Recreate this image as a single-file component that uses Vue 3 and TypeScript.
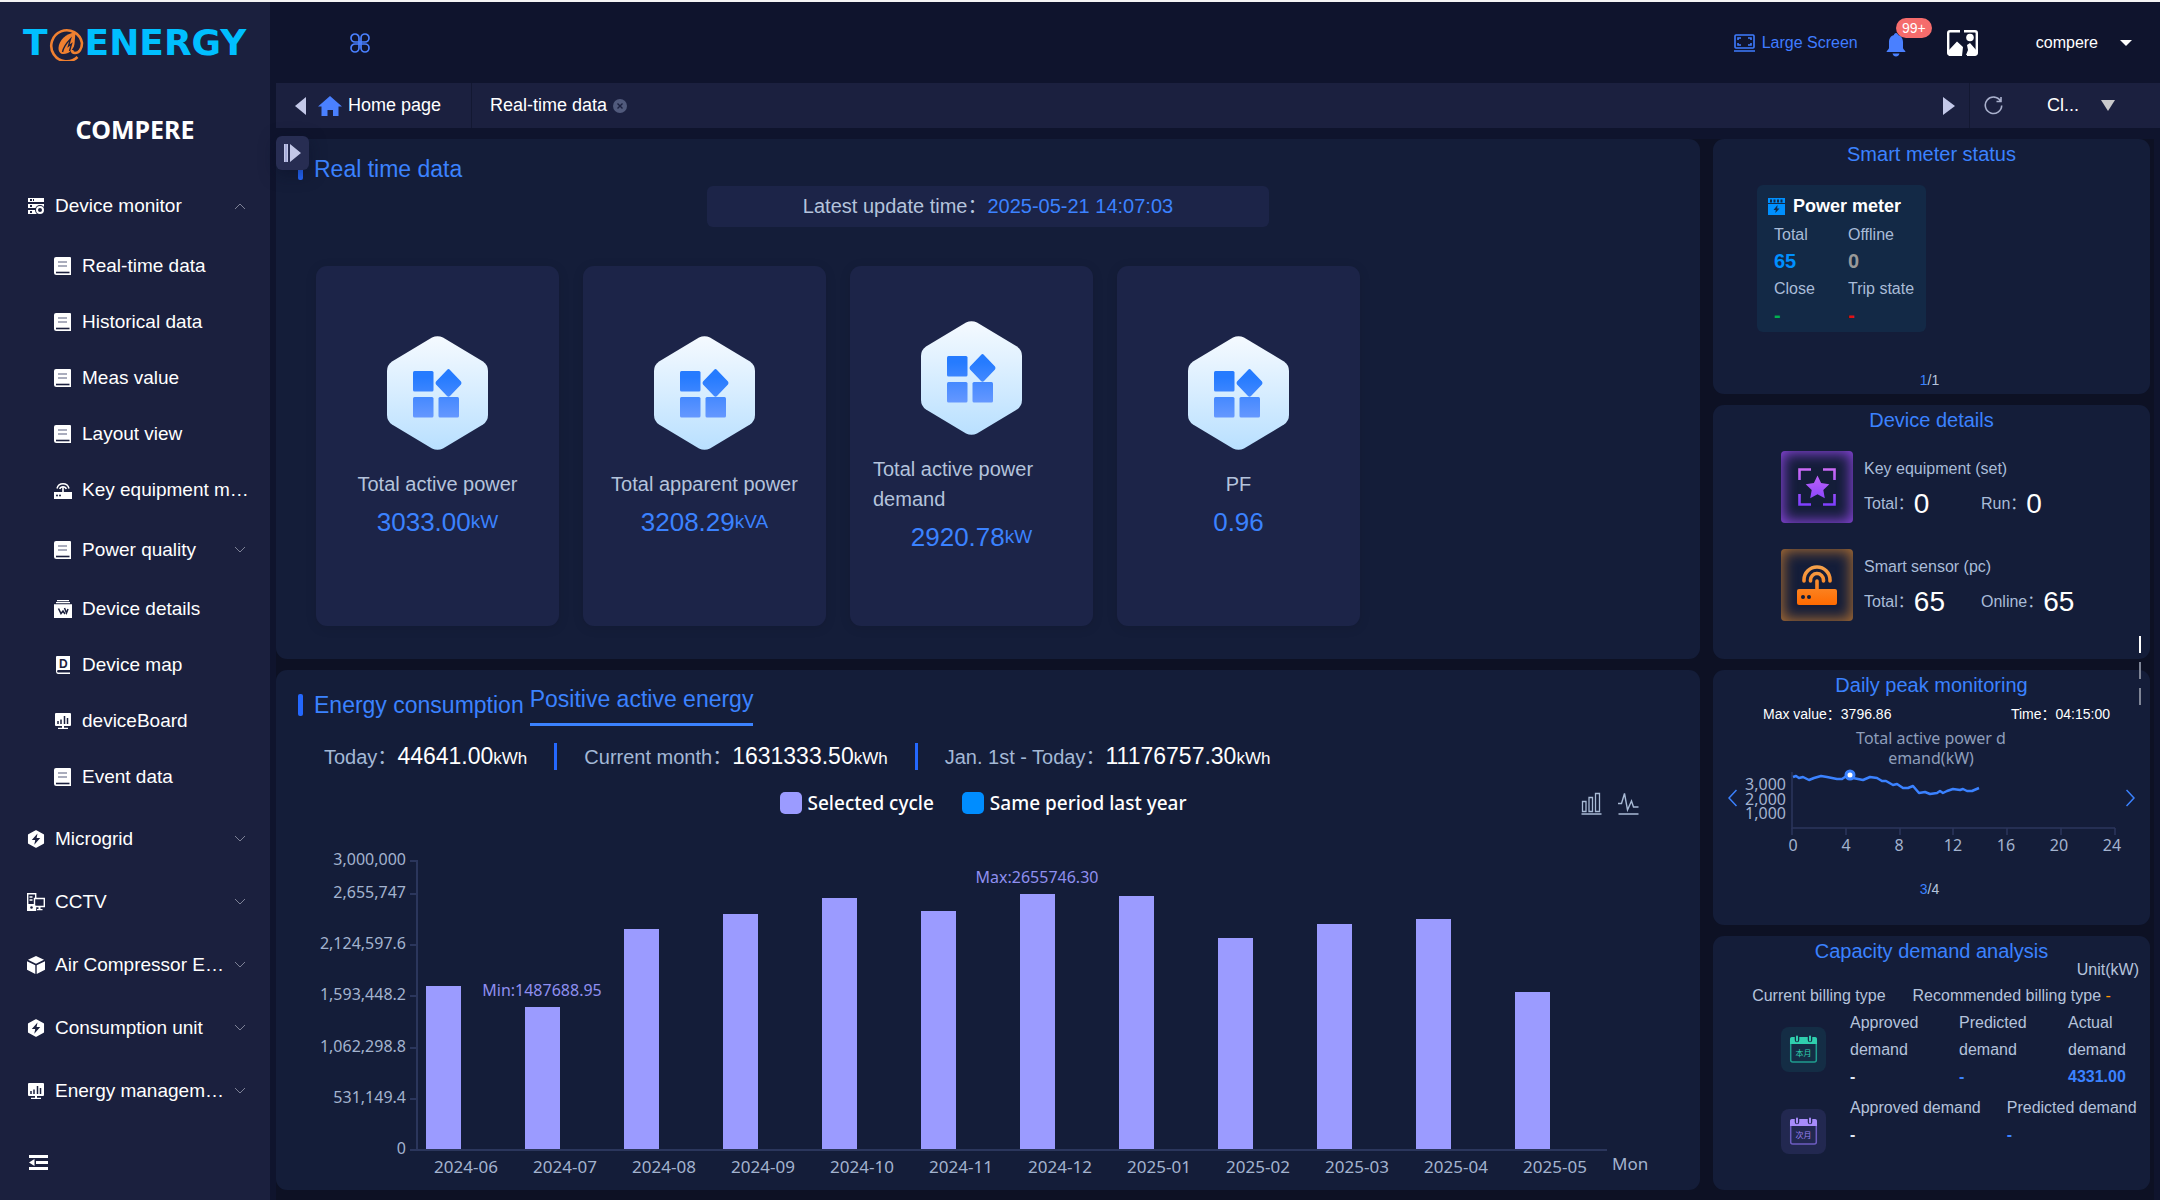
<script setup lang="ts">
import { ref } from 'vue'

interface MenuItem {
  label: string
  icon: string
  open?: boolean
  expandable?: boolean
  children?: MenuItem[]
}

const icons: Record<string, string> = {
  server:
    '<path fill="#fff" d="M1 1h16v4H1zM1 7h16v4H1zM1 13h9v4H1z"/><g fill="#1b203e"><rect x="3" y="2" width="2" height="2"/><rect x="3" y="8" width="2" height="2"/><rect x="3" y="14" width="2" height="2"/><rect x="6" y="2" width="1" height="2"/></g><circle cx="13" cy="13" r="5" fill="#1b203e"/><circle cx="13" cy="13" r="3" fill="none" stroke="#fff" stroke-width="2"/>',
  book:
    '<path fill="#fff" d="M2 0h14a1 1 0 0 1 1 1v17H2.500a2.500 2.500 0 0 1-2.500-2.500V2a2 2 0 0 1 2-2z"/><path stroke="#8f93a8" stroke-width="1.300" d="M4 5h9M4 9h9"/><path stroke="#1b203e" stroke-width="1.600" d="M2 15.500h13.500"/>',
  router:
    '<path fill="#fff" d="M0 11h18v7H0zM8.200 6h1.600v5H8.200z"/><g fill="none" stroke="#fff" stroke-width="1.500"><path d="M3 7.500a6.200 6.200 0 0 1 12 0M5.700 8a3.500 3.500 0 0 1 6.600 0"/></g><circle cx="3" cy="14.500" r="1" fill="#1b203e"/><circle cx="6" cy="14.500" r="1" fill="#1b203e"/>',
  archive:
    '<path fill="#fff" d="M3 0h12v1.300H3zM2 2h14v1.300H2zM0 4.200h18V18H0z"/><path fill="none" stroke="#1b203e" stroke-width="1.500" d="M4.500 8.500l2.500 5 2-2.500 2 3M10.500 8l2 5 1.500-4"/>',
  dmap:
    '<path fill="#fff" d="M3 0h13v14H4a1.300 1.300 0 0 0 0 2.500h12V18H4a2.600 2.600 0 0 1-2-2.500V1a1 1 0 0 1 1-1z"/><text x="9.300" y="11.500" text-anchor="middle" font-family="Liberation Sans, sans-serif" font-weight="700" font-size="12" fill="#1b203e">D</text>',
  board:
    '<path fill="#fff" d="M2 1h14a1 1 0 0 1 1 1v11a1 1 0 0 1-1 1H2a1 1 0 0 1-1-1V2a1 1 0 0 1 1-1zM8 14h2v2H8zM4 15.700h10V17H4z"/><path stroke="#1b203e" stroke-width="1.500" d="M4 12V9M7 12V7.500M10.500 12V4M13.500 12V6"/>',
  hexbolt:
    '<path fill="#fff" stroke="#fff" stroke-width="1.500" stroke-linejoin="round" d="M9 1l7.300 4v8L9 17l-7.300-4V5z"/><path fill="#1b203e" d="M10.500 3.500L4.800 10h3.400l-.9 4.700L13.200 8H9.600z"/>',
  cctv:
    '<path fill="none" stroke="#fff" stroke-width="1.400" d="M8.500 12.500V17.300H.700V.700h8V5M2.500 4h3M2.500 7h3M7.500 5.500h9.800v8H7.500z"/><path fill="#fff" d="M1 11h7v6.500H1zM11.500 14h2v2h2v1.300h-5.500V16h1.500z"/><circle cx="4.500" cy="14.500" r="1.300" fill="#1b203e"/>',
  cube:
    '<path fill="#fff" d="M9 0l8 3.700-8 4-8-4zM0 5.300l8.300 4V18L0 13.700zM18 5.300l-8.300 4V18l8.300-4.300z"/>',
}

const menu = ref<MenuItem[]>([
  {
    label: 'Device monitor', icon: 'server', expandable: true, open: true,
    children: [
      { label: 'Real-time data', icon: 'book' },
      { label: 'Historical data', icon: 'book' },
      { label: 'Meas value', icon: 'book' },
      { label: 'Layout view', icon: 'book' },
      { label: 'Key equipment m…', icon: 'router' },
      { label: 'Power quality', icon: 'book', expandable: true },
      { label: 'Device details', icon: 'archive' },
      { label: 'Device map', icon: 'dmap' },
      { label: 'deviceBoard', icon: 'board' },
      { label: 'Event data', icon: 'book' },
    ],
  },
  { label: 'Microgrid', icon: 'hexbolt', expandable: true },
  { label: 'CCTV', icon: 'cctv', expandable: true },
  { label: 'Air Compressor E…', icon: 'cube', expandable: true },
  { label: 'Consumption unit', icon: 'hexbolt', expandable: true },
  { label: 'Energy managem…', icon: 'board', expandable: true },
])

const cards = [
  { label: 'Total active power', value: '3033.00', unit: 'kW' },
  { label: 'Total apparent power', value: '3208.29', unit: 'kVA' },
  { label: 'Total active power demand', value: '2920.78', unit: 'kW' },
  { label: 'PF', value: '0.96', unit: '' },
]

const totals = [
  { label: 'Today：', value: '44641.00' },
  { label: 'Current month：', value: '1631333.50' },
  { label: 'Jan. 1st - Today：', value: '11176757.30' },
]

/* Monthly bar chart geometry, in viewBox units */
const axisX = 141
const baseY = 310
const plotH = 289
const maxValue = 3000000
const step = 99
const yOf = (v: number): number => Math.round(baseY - (v / maxValue) * plotH)

const yTicks = [
  { v: 3000000, t: '3,000,000' },
  { v: 2655747, t: '2,655,747' },
  { v: 2124597.6, t: '2,124,597.6' },
  { v: 1593448.2, t: '1,593,448.2' },
  { v: 1062298.8, t: '1,062,298.8' },
  { v: 531149.4, t: '531,149.4' },
  { v: 0, t: '0' },
]

const months: { m: string; v: number; note?: string }[] = [
  { m: '2024-06', v: 1705000 },
  { m: '2024-07', v: 1487688.95, note: 'Min:1487688.95' },
  { m: '2024-08', v: 2294000 },
  { m: '2024-09', v: 2450000 },
  { m: '2024-10', v: 2616000 },
  { m: '2024-11', v: 2477000 },
  { m: '2024-12', v: 2655746.3, note: 'Max:2655746.30' },
  { m: '2025-01', v: 2632000 },
  { m: '2025-02', v: 2200000 },
  { m: '2025-03', v: 2343000 },
  { m: '2025-04', v: 2398000 },
  { m: '2025-05', v: 1637000 },
]

const hours = [0, 4, 8, 12, 16, 20, 24]
const demandLine =
  '52,49 55,48 58,50 62,49 68,52 73,50 80,48 86,49 96,51 101,51 104,49 109,47 112,50 122,52 129,49 136,50 141,53 145,53 152,57 156,56 162,60 167,60 172,58 178,65 184,64 189,66 196,65 199,63 202,65 206,63 212,61 219,62 222,61 226,63 231,63 238,60'
</script>

<template>
  <div class="app">
    <aside class="sidebar">
      <div class="logo">
        <span>T</span>
        <svg width="35" height="36" viewBox="0 0 34 36" aria-hidden="true">
          <path d="M28 32A15.500 15.500 0 1 1 32.500 18c0 6-3 10-7 10-2 0-3-1-3-3" fill="none" stroke="#f08030" stroke-width="2.600" />
          <path d="M26 7C16 9 9.500 15 9 23c0 4 2 6 5 6 5 0 10-4 11-10z" fill="#f08030" />
          <path d="M13 27c1-5 4-9 8-13l-2 7 3-2-2 7" fill="none" stroke="#1b203e" stroke-width="1.400" />
        </svg>
        <span>ENERGY</span>
      </div>
      <h1 class="brand">COMPERE</h1>
      <nav class="menu">
        <ul>
          <li v-for="item in menu" :key="item.label">
            <button type="button" class="item" :class="{ first: item.open }" @click="item.open = !item.open">
              <svg width="18" height="18" viewBox="0 0 18 18" aria-hidden="true" v-html="icons[item.icon]"></svg>
              <span class="label">{{ item.label }}</span>
              <svg class="chev" :class="{ up: item.open }" width="12" height="8" viewBox="0 0 12 8" aria-hidden="true"><path d="M1 1l5 5 5-5" /></svg>
            </button>
            <ul v-if="item.open && item.children" class="sub">
              <li v-for="child in item.children" :key="child.label">
                <a href="#" class="item child" :class="{ group: child.expandable }">
                  <svg width="18" height="18" viewBox="0 0 18 18" aria-hidden="true" v-html="icons[child.icon]"></svg>
                  <span class="label">{{ child.label }}</span>
                  <svg v-if="child.expandable" class="chev" width="12" height="8" viewBox="0 0 12 8" aria-hidden="true"><path d="M1 1l5 5 5-5" /></svg>
                </a>
              </li>
            </ul>
          </li>
        </ul>
      </nav>
      <button type="button" class="fold" aria-label="Collapse menu">
        <svg width="19" height="16" viewBox="0 0 19 16" fill="#fff" aria-hidden="true"><path d="M0 0h19v3H0zM7 6h12v3H7zM0 12h19v3H0zM0 7.500L5.500 4v7z" /></svg>
      </button>
    </aside>

    <div class="body">
      <header class="top">
        <button type="button" class="apps" aria-label="Applications">
          <svg width="20" height="20" viewBox="0 0 20 20" fill="none" stroke="#4a80ff" stroke-width="1.700" aria-hidden="true">
            <path d="M9 9V5a4 4 0 1 0-4 4h10a4 4 0 1 0-4-4v10a4 4 0 1 0 4-4H5a4 4 0 1 0 4 4V9z" />
          </svg>
        </button>
        <div class="tools">
          <a href="#" class="screen">
            <svg width="21" height="18" viewBox="0 0 21 18" fill="none" stroke="#3f7cff" stroke-width="1.600" aria-hidden="true">
              <rect x="1" y="1" width="19" height="13" rx="1" /><path d="M0 17h21M4 6V4h3M14 4h3v2M17 9v2h-3M7 11H4V9" />
            </svg>
            <span>Large Screen</span>
          </a>
          <button type="button" class="bell" aria-label="Notifications">
            <svg width="20" height="24" viewBox="0 0 20 24" fill="#4a80ff" aria-hidden="true"><path d="M10 0c1.200 0 2 1 2 2 3.500 1 5 4 5 7v6c0 1.500 2.500 2.500 2.500 4H.500c0-1.500 2.500-2.500 2.500-4V9c0-3 1.500-6 5-7 0-1 .8-2 2-2zM6.500 20.500h7c-.5 2-1.800 3-3.500 3s-3-1-3.500-3z" /></svg>
            <span class="badge">99+</span>
          </button>
          <svg class="avatar" width="31" height="26" viewBox="0 0 31 26" role="img" aria-label="Avatar">
            <path d="M13 1.200H3A1.800 1.800 0 0 0 1.200 3v20A1.800 1.800 0 0 0 3 24.800h10M17 1.200h11A1.800 1.800 0 0 1 29.800 3v20a1.800 1.800 0 0 1-1.800 1.800H20" fill="none" stroke="#fff" stroke-width="2.400" />
            <path d="M2 20l8-8.500 6 5.500-1 9H2zM19 25l2-5-1-5 3-2 7 8v4z" fill="#fff" /><circle cx="23" cy="7.500" r="3.800" fill="#fff" />
          </svg>
          <button type="button" class="user">compere
            <svg width="12" height="6" viewBox="0 0 12 6" fill="#fff" aria-hidden="true"><path d="M0 0h12L6 6z" /></svg>
          </button>
        </div>
      </header>

      <div class="tabs">
        <button type="button" class="tab home">
          <svg width="11" height="18" viewBox="0 0 11 18" fill="#c3c8e8" aria-hidden="true"><path d="M11 0v18L0 9z" /></svg>
          <svg width="24" height="20" viewBox="0 0 24 20" fill="#4a80ff" aria-hidden="true"><path d="M12 0l12 10.500h-3.500V20H15v-6H9.500v6H3.500v-9.500H0z" /></svg>
          <span>Home page</span>
        </button>
        <button type="button" class="tab current">
          <span>Real-time data</span>
          <svg width="14" height="14" viewBox="0 0 14 14" aria-hidden="true"><circle cx="7" cy="7" r="7" fill="#515a7c" /><path d="M4.500 4.500l5 5M9.500 4.500l-5 5" stroke="#1b203f" stroke-width="1.400" /></svg>
        </button>
        <div class="tab-tools">
          <button type="button" class="next" aria-label="Next tabs"><svg width="12" height="18" viewBox="0 0 12 18" fill="#c3c8e8" aria-hidden="true"><path d="M0 0l12 9L0 18z" /></svg></button>
          <button type="button" class="reload" aria-label="Reload">
            <svg width="19" height="19" viewBox="0 0 19 19" fill="none" stroke="#a9b0cc" stroke-width="1.600" aria-hidden="true"><path d="M16.500 5A8.200 8.200 0 1 0 17.700 9.500M17 1v4.500h-4.500" /></svg>
          </button>
          <button type="button" class="closer">Cl...
            <svg width="14" height="11" viewBox="0 0 14 11" fill="#c9c9cb" aria-hidden="true"><path d="M0 0h14L7 11z" /></svg>
          </button>
        </div>
      </div>

      <main class="board">
        <button type="button" class="drawer" aria-label="Open device tree">
          <svg width="17" height="18" viewBox="0 0 17 18" fill="#c3c8e8" aria-hidden="true"><path d="M0 0h4v18H0zM6 0l11 9L6 18z" /><path d="M1.500 0h1v18h-1z" fill="#8a90c8" /></svg>
        </button>

        <div class="left">
          <section class="panel">
            <h2 class="title rt"><i class="mark"></i>Real time data</h2>
            <p class="updated">Latest update time：<span>2025-05-21 14:07:03</span></p>
            <div class="cards">
              <article v-for="c in cards" :key="c.label" class="card">
                <svg width="101" height="114" viewBox="0 0 101 114" aria-hidden="true">
                  <defs>
                    <linearGradient id="hexFill" x1="0" y1="0" x2="0" y2="1"><stop offset="0" stop-color="#f5faff" /><stop offset="1" stop-color="#b9e0ff" /></linearGradient>
                    <linearGradient id="tileFill" gradientUnits="userSpaceOnUse" x1="0" y1="34" x2="0" y2="82"><stop offset="0.150" stop-color="#257bff" /><stop offset="1" stop-color="#6698ff" /></linearGradient>
                  </defs>
                  <path fill="url(#hexFill)" d="M45 1.500Q50.500-1 56 1.500L96 25.500Q101 29 101 35V79Q101 85 96 88.500L56 112.500Q50.500 115 45 112.500L5 88.500Q0 85 0 79V35Q0 29 5 25.500Z" />
                  <g fill="url(#tileFill)"><rect x="26" y="35" width="20.500" height="20.500" rx="1.500" /><rect x="26" y="61" width="20.500" height="20.500" rx="1.500" /><rect x="51.500" y="61" width="20.500" height="20.500" rx="1.500" /><path d="M60 34Q61.500 32 63 34L74 45.500Q75 47 74 48.500L63 60Q61.500 61.500 60 60L49 48.500Q48 47 49 45.500Z" /></g>
                </svg>
                <p class="name">{{ c.label }}</p>
                <p class="value">{{ c.value }}<small>{{ c.unit }}</small></p>
              </article>
            </div>
          </section>

          <section class="panel energy">
            <div class="head">
              <h2 class="title"><i class="mark"></i>Energy consumption</h2>
              <button type="button" class="kind">Positive active energy</button>
            </div>
            <div class="totals">
              <p v-for="t in totals" :key="t.label">{{ t.label }}<b>{{ t.value }}</b><small>kWh</small></p>
            </div>
            <div class="legend">
              <span class="key"><i class="swatch now"></i>Selected cycle</span>
              <span class="key"><i class="swatch last"></i>Same period last year</span>
              <div class="modes">
                <button type="button" aria-label="Bar chart"><svg width="21" height="23" viewBox="0 0 21 23" fill="none" stroke="#a9bbd6" stroke-width="1.300" aria-hidden="true"><path d="M1.500 9.500h3.500v10H1.500zM8 5.500h3.500v14H8zM14.500 1.500H18.500v18h-4zM.500 22h20" /></svg></button>
                <button type="button" aria-label="Line chart"><svg width="21" height="23" viewBox="0 0 21 23" fill="none" stroke="#a9bbd6" stroke-width="1.400" aria-hidden="true"><path d="M0 11.500h3.500l3-10L9.500 18l4-9 2 6H20.500M.500 22h20" /></svg></button>
              </div>
            </div>
            <svg class="bars" viewBox="0 0 1424 350" role="img" aria-label="Monthly energy">
              <g stroke="#2b365c" stroke-width="2" fill="none">
                <path :d="`M${axisX} 20V${baseY}H1331`" />
                <path v-for="t in yTicks" :key="t.v" :d="`M${axisX - 7} ${yOf(t.v)}h7`" />
              </g>
              <text v-for="t in yTicks" :key="t.t" x="130" :y="yOf(t.v) + 4" text-anchor="end">{{ t.t }}</text>
              <g v-for="(b, i) in months" :key="b.m">
                <rect :x="axisX + 9 + i * step" :y="yOf(b.v)" width="35" :height="baseY - 1 - yOf(b.v)" fill="#9b9bff" />
                <text class="month" :x="axisX + 49 + i * step" y="333" text-anchor="middle">{{ b.m }}</text>
                <text v-if="b.note" class="note" :x="axisX + 26 + i * step" :y="yOf(b.v) - 11" text-anchor="middle">{{ b.note }}</text>
              </g>
              <text class="month" x="1336" y="330">Mon</text>
            </svg>
          </section>
        </div>

        <div class="right">
          <section class="panel side">
            <h2>Smart meter status</h2>
            <div class="meter">
              <h3>
                <svg width="17" height="17" viewBox="0 0 17 17" aria-hidden="true"><path fill="#0090ff" d="M0 0h17v17H0z" /><path fill="#132946" d="M2 1.500h2v3H2zM5.500 1.500h2v3h-2zM9 1.500h2v3H9zM12.500 1.500h2v3h-2zM0 5h17v1H0zM9.500 7L5.500 12h2.300l-.5 3L11.500 10.500H9.200z" /></svg>
                Power meter
              </h3>
              <dl>
                <div><dt>Total</dt><dd class="blue">65</dd></div>
                <div><dt>Offline</dt><dd class="grey">0</dd></div>
                <div><dt>Close</dt><dd class="green">-</dd></div>
                <div><dt>Trip state</dt><dd class="red">-</dd></div>
              </dl>
            </div>
            <p class="pager end"><b>1</b>/1</p>
          </section>

          <section class="panel side">
            <h2>Device details</h2>
            <div class="device first-device">
              <span class="glow violet">
                <svg width="40" height="40" viewBox="0 0 40 40" aria-hidden="true">
                  <defs><linearGradient id="violetFill" gradientUnits="userSpaceOnUse" x1="0" y1="0" x2="0" y2="40"><stop offset="0" stop-color="#cf6cf5" /><stop offset="1" stop-color="#7a3cff" /></linearGradient></defs>
                  <path fill="none" stroke="url(#violetFill)" stroke-width="2.600" d="M2.500 13V2.500H14M26 2.500h11.500V13M37.500 27v10.500H26M14 37.500H2.500V27" />
                  <path fill="url(#violetFill)" d="M20.500 8.500l3.600 7.600 8.200 1.100-6 5.700 1.500 8.300-7.300-4-7.300 4 1.500-8.300-6-5.700 8.200-1.100z" />
                </svg>
              </span>
              <div>
                <p>Key equipment (set)</p>
                <p class="nums"><span>Total：<b>0</b></span><span>Run：<b>0</b></span></p>
              </div>
            </div>
            <div class="device">
              <span class="glow amber">
                <svg width="40" height="40" viewBox="0 0 40 40" aria-hidden="true">
                  <defs><linearGradient id="amberFill" gradientUnits="userSpaceOnUse" x1="0" y1="0" x2="0" y2="40"><stop offset="0" stop-color="#f5a44e" /><stop offset="1" stop-color="#ff6a00" /></linearGradient></defs>
                  <path fill="none" stroke="url(#amberFill)" stroke-width="3.600" stroke-linecap="round" d="M7 16V15a13 13 0 0 1 26 0v1M13.500 16v-1a6.500 6.500 0 0 1 13 0v1M20 16v8" />
                  <path fill="url(#amberFill)" d="M2 24h36a2 2 0 0 1 2 2v12a2 2 0 0 1-2 2H2a2 2 0 0 1-2-2V26a2 2 0 0 1 2-2z" />
                  <circle cx="6" cy="32" r="2" fill="#141d39" /><circle cx="12" cy="32" r="2" fill="#141d39" />
                </svg>
              </span>
              <div>
                <p>Smart sensor (pc)</p>
                <p class="nums"><span>Total：<b>65</b></span><span>Online：<b>65</b></span></p>
              </div>
            </div>
          </section>

          <section class="panel side">
            <h2>Daily peak monitoring</h2>
            <p class="peak"><span>Max value：3796.86</span><span>Time：04:15:00</span></p>
            <div class="carousel">
              <button type="button" aria-label="Previous"><svg width="9" height="18" viewBox="0 0 9 18" aria-hidden="true"><path d="M8.500 1L1 9l7.500 8" /></svg></button>
              <svg class="demand" viewBox="0 0 381 130" role="img" aria-label="Total active power demand">
                <text class="cap" x="190" y="16" text-anchor="middle">Total active power d</text>
                <text class="cap" x="190" y="36" text-anchor="middle">emand(kW)</text>
                <g stroke="#2b365c" stroke-width="1.500" fill="none">
                  <path d="M51 44v56h323" />
                  <path v-for="(h, i) in hours" :key="h" :d="`M${51 + Math.round(i * 53.8)} 100v7`" />
                </g>
                <text v-for="(h, i) in hours" :key="h" :x="Math.round(52 + i * 53.2)" y="123" text-anchor="middle">{{ h }}</text>
                <text x="45" y="62" text-anchor="end">3,000</text>
                <text x="45" y="77" text-anchor="end">2,000</text>
                <text x="45" y="91" text-anchor="end">1,000</text>
                <polyline :points="demandLine" fill="none" stroke="#3b82ff" stroke-width="2.500" stroke-linejoin="round" />
                <circle cx="109" cy="47" r="4" fill="#fff" stroke="#3b82ff" stroke-width="3" />
              </svg>
              <button type="button" aria-label="Next"><svg width="9" height="18" viewBox="0 0 9 18" aria-hidden="true"><path d="M.500 1L8 9l-7.500 8" /></svg></button>
            </div>
            <p class="pager mid"><b>3</b>/4</p>
          </section>

          <section class="panel side">
            <h2>Capacity demand analysis</h2>
            <p class="unit">Unit(kW)</p>
            <p class="billing"><span>Current billing type</span><span>Recommended billing type <i>-</i></span></p>
            <div class="period">
              <svg class="cal teal" width="45" height="45" viewBox="0 0 45 45" role="img" aria-label="This month">
                <rect x="9.700" y="11" width="25.600" height="24" rx="2" fill="none" stroke="#1f9c8e" stroke-width="1.500" />
                <path fill="#2fcfae" d="M11 10h23a2 2 0 0 1 2 2v5H9v-5a2 2 0 0 1 2-2z" />
                <path d="M16 9v4M29 9v4" stroke="#142d45" stroke-width="4.500" stroke-linecap="round" /><path d="M16 9.500v4M29 9.500v4" stroke="#2fcfae" stroke-width="2" stroke-linecap="round" />
                <text x="22.500" y="29" text-anchor="middle" fill="#2fcfae">本月</text>
              </svg>
              <dl class="thirds">
                <div><dt>Approved demand</dt><dd>-</dd></div>
                <div><dt>Predicted demand</dt><dd class="hot">-</dd></div>
                <div><dt>Actual demand</dt><dd class="hot">4331.00</dd></div>
              </dl>
            </div>
            <div class="period following">
              <svg class="cal plum" width="45" height="45" viewBox="0 0 45 45" role="img" aria-label="Next month">
                <rect x="9.700" y="11" width="25.600" height="24" rx="2" fill="none" stroke="#6d5cc0" stroke-width="1.500" />
                <path fill="#a78bfa" d="M11 10h23a2 2 0 0 1 2 2v5H9v-5a2 2 0 0 1 2-2z" />
                <path d="M16 9v4M29 9v4" stroke="#222850" stroke-width="4.500" stroke-linecap="round" /><path d="M16 9.500v4M29 9.500v4" stroke="#a78bfa" stroke-width="2" stroke-linecap="round" />
                <text x="22.500" y="29" text-anchor="middle" fill="#9a80f0">次月</text>
              </svg>
              <dl class="halves">
                <div><dt>Approved demand</dt><dd>-</dd></div>
                <div><dt>Predicted demand</dt><dd class="hot">-</dd></div>
              </dl>
            </div>
          </section>

          <div class="dots">
            <button type="button" class="on" aria-label="Page 1"></button>
            <button type="button" aria-label="Page 2"></button>
            <button type="button" aria-label="Page 3"></button>
          </div>
        </div>
      </main>
    </div>
  </div>
</template>

<style>
body {
  background: #0f142d;
}
</style>

<style scoped>
.app {
  display: flex;
  min-height: 100vh;
  box-sizing: border-box;
  border-top: 2px solid #f4f4f4;
  background: #0f142d;
  color: #fff;
  font-family: 'Liberation Sans', 'Noto Sans CJK SC', sans-serif;
  font-size: 16px;
}
.app * {
  box-sizing: border-box;
}
h1, h2, h3, p, ul, dl, dd {
  margin: 0;
  padding: 0;
}
ul {
  list-style: none;
}
button {
  margin: 0;
  padding: 0;
  border: 0;
  background: none;
  color: inherit;
  font: inherit;
  cursor: pointer;
}
a {
  color: inherit;
  text-decoration: none;
}
svg {
  display: block;
  flex: none;
}

/* Sidebar */
.sidebar {
  display: flex;
  flex-direction: column;
  flex: none;
  width: 270px;
  background: #1b203e;
}
.logo {
  display: flex;
  align-items: center;
  gap: 1px;
  height: 81px;
  padding-left: 23px;
  color: #00bfff;
  font: 700 36px/81px 'DejaVu Sans', sans-serif;
}
.brand {
  height: 92px;
  text-align: center;
  font: 700 25px/92px 'Noto Sans', sans-serif;
}
.item {
  display: flex;
  align-items: center;
  gap: 10px;
  width: 100%;
  height: 63px;
  padding: 0 24px 0 27px;
  font-size: 19px;
  text-align: left;
}
.item.first {
  height: 62px;
}
.item.child {
  height: 56px;
  padding-left: 54px;
  padding-right: 16px;
}
.item.child.group {
  height: 63px;
  padding-right: 24px;
}
.sub {
  padding: 1px 0 2px;
}
.label {
  flex: 1;
  line-height: 28px;
  white-space: nowrap;
}
.chev {
  fill: none;
  stroke: #7d8196;
}
.chev.up {
  transform: rotate(180deg);
}
.fold {
  display: flex;
  align-items: center;
  height: 74px;
  margin-top: auto;
  padding-left: 29px;
}

/* Header */
.body {
  display: flex;
  flex: 1;
  flex-direction: column;
  min-width: 0;
  padding-left: 6px;
}
.top {
  display: flex;
  align-items: center;
  justify-content: space-between;
  height: 81px;
  padding: 0 28px 0 74px;
}
.tools {
  display: flex;
  align-items: center;
}
.screen {
  display: flex;
  align-items: center;
  gap: 7px;
  color: #3f7cff;
}
.bell {
  position: relative;
  margin-left: 28px;
  padding-top: 4px;
}
.badge {
  position: absolute;
  left: 10px;
  bottom: 19px;
  width: 36px;
  border-radius: 10px;
  background: #f56c6c;
  font-size: 14px;
  line-height: 20px;
}
.avatar {
  margin-left: 41px;
}
.user {
  display: flex;
  align-items: center;
  gap: 22px;
  margin-left: 58px;
}

/* Tab strip */
.tabs {
  display: flex;
  height: 45px;
  background: #1b203f;
  font-size: 18px;
}
.tab {
  display: flex;
  align-items: center;
}
.home {
  width: 196px;
  padding-left: 19px;
  border-right: 1px solid #131832;
}
.home span {
  margin-left: 6px;
}
.home svg + svg {
  margin-left: 12px;
}
.current {
  gap: 6px;
  padding-left: 18px;
}
.tab-tools {
  display: flex;
  align-items: center;
  margin-left: auto;
  padding-right: 45px;
}
.next {
  display: flex;
  align-items: center;
  height: 45px;
  padding-right: 14px;
  border-right: 1px solid #131832;
}
.reload {
  margin-left: 14px;
}
.closer {
  display: flex;
  align-items: center;
  gap: 22px;
  margin-left: 44px;
}

/* Board */
.board {
  position: relative;
  display: flex;
  flex: 1;
  gap: 13px;
  margin: 11px 6px 0 0;
  padding: 0 4px 10px 0;
  background: #0d1124;
}
.drawer {
  position: absolute;
  z-index: 1;
  top: -3px;
  left: 0;
  display: flex;
  align-items: center;
  justify-content: center;
  width: 33px;
  height: 34px;
  border-radius: 6px;
  background: #272d52;
  box-shadow: 0 4px 16px rgba(10, 16, 40, 0.5);
}
.left,
.right {
  display: flex;
  flex-direction: column;
  gap: 11px;
}
.left {
  flex: 1;
  min-width: 0;
}
.right {
  position: relative;
  flex: none;
  width: 437px;
}
.panel {
  display: flex;
  flex: 1 1 0;
  flex-direction: column;
  border-radius: 11px;
  background: #141d39;
}
.title {
  display: flex;
  align-items: center;
  padding-left: 22px;
  color: #3b82ff;
  font-size: 23px;
  font-weight: 400;
  line-height: 30px;
}
.mark {
  width: 5px;
  height: 22px;
  margin-right: 11px;
  border-radius: 2px;
  background: #2468ff;
}
.rt {
  margin: 15px 0 2px;
}
.updated {
  align-self: center;
  width: 562px;
  max-width: 100%;
  height: 41px;
  border-radius: 6px;
  background: #1c2448;
  color: #b4c3dc;
  font-size: 20px;
  line-height: 41px;
  text-align: center;
}
.updated span {
  color: #3b82ff;
}
.cards {
  display: flex;
  gap: 24px;
  padding: 39px 40px 33px;
}
.card {
  display: flex;
  flex: 0 1 243px;
  flex-direction: column;
  align-items: center;
  justify-content: center;
  height: 360px;
  padding: 0 23px 15px;
  border-radius: 11px;
  background: #1c2448;
  box-shadow: 0 2px 12px rgba(0, 0, 0, 0.1);
}
.name {
  margin-top: 19px;
  color: #b4c3dc;
  font-size: 20px;
  line-height: 30px;
}
.value {
  display: flex;
  align-items: center;
  margin-top: 4px;
  color: #3b82ff;
  font-size: 26px;
  line-height: 38px;
}
.value small {
  font-size: 19px;
}

/* Energy panel */
.head {
  display: flex;
  align-items: flex-end;
  gap: 6px;
  height: 56px;
}
.head .title {
  margin-bottom: 6px;
}
.kind {
  padding-bottom: 7px;
  border-bottom: 3px solid #3b82ff;
  color: #3b82ff;
  font-size: 23px;
  line-height: 33px;
}
.totals {
  display: flex;
  height: 27px;
  margin-top: 17px;
  padding-left: 48px;
  color: #a3b8d6;
  font-size: 20px;
  line-height: 27px;
}
.totals p {
  display: flex;
  align-items: baseline;
}
.totals p + p {
  margin-left: 27px;
  padding-left: 27px;
  border-left: 3px solid #2468ff;
}
.totals b {
  color: #fff;
  font-size: 23px;
  font-weight: 400;
}
.totals small {
  color: #fff;
  font-size: 17px;
}
.legend {
  position: relative;
  display: flex;
  justify-content: center;
  gap: 28px;
  height: 22px;
  margin-top: 22px;
  padding-right: 10px;
  font: 500 19px/22px 'Noto Sans', sans-serif;
}
.key {
  display: flex;
  gap: 6px;
}
.swatch {
  width: 22px;
  height: 22px;
  border-radius: 5px;
}
.now {
  background: #9b9bff;
}
.last {
  background: #008dff;
}
.modes {
  position: absolute;
  top: 0;
  right: 61px;
  display: flex;
  gap: 16px;
}
.bars {
  width: 100%;
  margin-top: 26px;
}
.bars text {
  fill: #a3b3cf;
  font: 16px 'Noto Sans', sans-serif;
}
.bars .month {
  font-size: 17px;
}
.bars .note {
  fill: #8f8ff0;
}

/* Right column */
.side h2 {
  color: #3b82ff;
  font-size: 20px;
  font-weight: 400;
  line-height: 30px;
  text-align: center;
}
.meter {
  width: 169px;
  height: 147px;
  margin: 16px 0 0 44px;
  padding: 6px 0 0 11px;
  border-radius: 6px;
  background: #132946;
}
.meter h3 {
  display: flex;
  align-items: center;
  gap: 8px;
  font-size: 18px;
  line-height: 30px;
}
.meter dl {
  display: grid;
  grid-template-columns: 74px 1fr;
  padding-left: 6px;
  line-height: 27px;
}
dt {
  color: #a9bcd8;
}
.meter dd {
  font-size: 20px;
  font-weight: 700;
}
.blue {
  color: #0090ff;
}
.grey {
  color: #999;
}
.green {
  color: #00b050;
}
.red {
  color: #e01010;
}
.pager {
  padding-right: 4px;
  color: #b4c3dc;
  font-size: 14px;
  line-height: 20px;
  text-align: center;
}
.pager b {
  color: #3b82ff;
  font-weight: 400;
}
.pager.end {
  margin-top: auto;
  padding-bottom: 4px;
}
.pager.mid {
  margin-top: 21px;
}
.device {
  display: flex;
  gap: 11px;
  height: 72px;
  margin: 26px 0 0 68px;
  color: #a9bcd8;
  line-height: 35px;
}
.first-device {
  margin-top: 16px;
}
.glow {
  display: flex;
  align-items: center;
  justify-content: center;
  width: 72px;
  height: 72px;
  border-radius: 4px;
}
.violet {
  box-shadow: inset 0 0 14px 2px #8a45dc;
}
.amber {
  box-shadow: inset 0 0 14px 2px #a86c32;
}
.nums {
  display: flex;
}
.nums span {
  display: flex;
  align-items: center;
  width: 117px;
}
.nums b {
  color: #fff;
  font-size: 28px;
  font-weight: 400;
}
.peak {
  display: flex;
  justify-content: space-between;
  height: 28px;
  padding: 0 40px 0 50px;
  font-size: 14px;
  line-height: 28px;
}
.carousel {
  display: flex;
  align-items: center;
  gap: 4px;
  padding: 0 15px;
}
.carousel button {
  padding-top: 10px;
}
.carousel button svg {
  fill: none;
  stroke: #3b82ff;
  stroke-width: 1.5;
}
.demand {
  flex: 1;
}
.demand text {
  fill: #a3b3cf;
  font: 16px 'Noto Sans', sans-serif;
}
.demand .cap {
  fill: #8e9ebb;
}
.unit {
  margin-top: -6px;
  padding-right: 11px;
  color: #b4c3dc;
  line-height: 20px;
  text-align: right;
}
.billing {
  display: flex;
  justify-content: center;
  gap: 27px;
  margin-top: 2px;
  color: #b4c3dc;
  line-height: 27px;
}
.billing i {
  color: #ff9800;
  font-style: normal;
}
.period {
  display: flex;
  align-items: center;
  gap: 24px;
  padding-left: 68px;
  line-height: 27px;
}
.period.following {
  align-items: flex-end;
  height: 60px;
  margin-top: 4px;
}
.cal {
  border-radius: 8px;
}
.cal text {
  font: 8px 'Noto Sans CJK SC', sans-serif;
}
.teal {
  background: #142d45;
}
.plum {
  background: #222850;
}
.period dl {
  display: flex;
}
.period dt {
  color: #b4c3dc;
}
.period dd {
  color: #dfe7f5;
  font-weight: 700;
}
.period dd.hot {
  color: #3b82ff;
}
.thirds {
  gap: 32px;
}
.thirds div {
  width: 77px;
}
.halves {
  gap: 26px;
  align-self: flex-start;
}
.dots {
  position: absolute;
  top: 497px;
  right: 9px;
  display: flex;
  flex-direction: column;
  gap: 9px;
}
.dots button {
  width: 2px;
  height: 17px;
  background: #7f8596;
}
.dots .on {
  background: #fff;
}
</style>
